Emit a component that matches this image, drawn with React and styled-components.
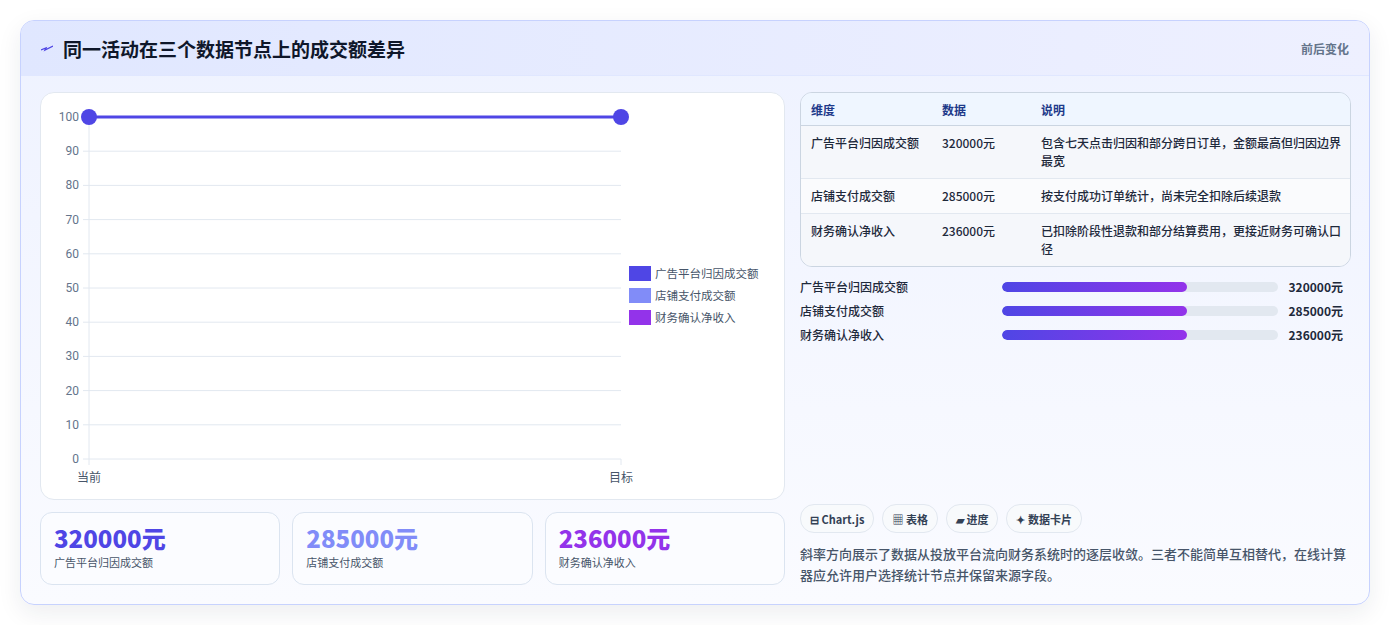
import React from "react";
import styled, { createGlobalStyle } from "styled-components";

const Global = createGlobalStyle`
  body { margin: 0; background: #f3f4f6; font-family: "Noto Sans CJK SC", "Noto Sans", sans-serif; }
`;

const Page = styled.div`
  padding: 20px;
  height: 625px;
  box-sizing: border-box;
  background: #fff;
`;

const Card = styled.div`
  border: 1px solid #c7d2fe;
  border-radius: 14px;
  overflow: hidden;
  background: linear-gradient(180deg, #eef2ff 0%, #fafbff 100%);
  box-shadow: 0 8px 24px rgba(30, 41, 59, 0.08);
  height: 585px;
  box-sizing: border-box;
`;

const Header = styled.div`
  height: 54px;
  display: flex;
  align-items: center;
  justify-content: space-between;
  padding: 0 20px;
  background: linear-gradient(90deg, #e0e7ff, #eef0ff);
  border-bottom: 1px solid #e0e7ff;
`;

const Title = styled.h2`
  margin: 0;
  font-size: 19px;
  font-weight: 700;
  color: #0f172a;
  display: flex;
  align-items: center;
  gap: 10px;
`;

const Tag = styled.span`
  font-size: 12px;
  font-weight: 700;
  color: #64748b;
`;

const Body = styled.div`
  display: grid;
  grid-template-columns: 745px 1fr;
  gap: 15px;
  padding: 16px 18px 18px 19px;
`;

const Col = styled.div`
  display: flex;
  flex-direction: column;
`;

const ChartBox = styled.div`
  background: #fff;
  border: 1px solid #e2e8f0;
  border-radius: 14px;
  height: 408px;
  box-sizing: border-box;
`;

const Stats = styled.div`
  display: grid;
  grid-template-columns: repeat(3, 1fr);
  gap: 12px;
  margin-top: 12px;
`;

const Stat = styled.div`
  border: 1px solid #dbe4f0;
  border-radius: 12px;
  background: #fbfcff;
  padding: 9px 13px 10px;
  height: 73px;
  box-sizing: border-box;
`;

const StatValue = styled.div`
  font-size: 24px;
  font-weight: 800;
  line-height: 32px;
  color: ${(p) => p.$c};
`;

const StatLabel = styled.div`
  font-size: 11px;
  color: #475569;
`;

const Table = styled.table`
  width: 100%;
  border-collapse: separate;
  border-spacing: 0;
  border: 1px solid #cbd5e1;
  border-radius: 12px;
  overflow: hidden;
  font-size: 12px;
  color: #1e293b;
  th {
    text-align: left;
    font-weight: 700;
    color: #1e3a8a;
    background: #eff6ff;
    height: 32px;
    padding: 0 10px;
    border-bottom: 1px solid #cbd5e1;
  }
  td {
    padding: 8px 4px 8px 10px;
    line-height: 18px;
    vertical-align: top;
    font-weight: 500;
    border-bottom: 1px solid #e2e8f0;
  }
  tr:last-child td { border-bottom: none; }
  tbody tr:nth-child(odd) { background: #f5f7fb; }
  tbody tr:nth-child(even) { background: #fafbfd; }
`;

const Bars = styled.div`
  display: flex;
  flex-direction: column;
  gap: 8px;
  margin-top: 11px;
`;

const BarRow = styled.div`
  display: grid;
  grid-template-columns: 202px 276px 1fr;
  align-items: center;
  font-size: 12px;
  height: 16px;
  color: #1e293b;
  font-weight: 500;
`;

const Track = styled.div`
  height: 10px;
  border-radius: 5px;
  background: #e2e8f0;
  overflow: hidden;
`;

const Fill = styled.div`
  height: 100%;
  border-radius: 5px;
  background: linear-gradient(90deg, #4f46e5, #9333ea);
`;

const Value = styled.span`
  text-align: right;
  font-weight: 700;
  padding-right: 8px;
`;

const Spacer = styled.div`
  flex: 1;
`;

const Chips = styled.div`
  display: flex;
  gap: 8px;
`;

const Chip = styled.span`
  font-size: 11px;
  font-weight: 700;
  color: #334155;
  border: 1px solid #e2e8f0;
  background: #f8fafc;
  border-radius: 14px;
  padding: 0 9px;
  height: 27px;
  display: inline-flex;
  align-items: center;
  gap: 3px;
`;

const Note = styled.p`
  margin: 10px 0 0;
  font-size: 13px;
  line-height: 21px;
  color: #475569;
  font-weight: 500;
`;

const rows = [
  ["广告平台归因成交额", "320000元", "包含七天点击归因和部分跨日订单，金额最高但归因边界最宽"],
  ["店铺支付成交额", "285000元", "按支付成功订单统计，尚未完全扣除后续退款"],
  ["财务确认净收入", "236000元", "已扣除阶段性退款和部分结算费用，更接近财务可确认口径"],
];

const Chart = () => {
  const L = 48, R = 580, T = 24, B = 366;
  const ticks = [0, 10, 20, 30, 40, 50, 60, 70, 80, 90, 100];
  const y = (v) => B - ((B - T) * v) / 100;
  const legend = [
    ["广告平台归因成交额", "#4f46e5"],
    ["店铺支付成交额", "#818cf8"],
    ["财务确认净收入", "#9333ea"],
  ];
  return (
    <svg width="743" height="406" fontFamily="Roboto, 'Noto Sans CJK SC', sans-serif">
      {ticks.map((t) => (
        <g key={t}>
          <line x1={L - 6} x2={R} y1={y(t)} y2={y(t)} stroke="#e2e8f0" />
          <text x={L - 10} y={y(t) + 4} textAnchor="end" fontSize="12" fill="#64748b">{t}</text>
        </g>
      ))}
      <line x1={L} x2={L} y1={T} y2={B + 6} stroke="#e2e8f0" />
      <line x1={R} x2={R} y1={B} y2={B + 6} stroke="#e2e8f0" />
      <text x={L} y={389} textAnchor="middle" fontSize="12" fill="#475569">当前</text>
      <text x={R} y={389} textAnchor="middle" fontSize="12" fill="#475569">目标</text>
      <line x1={L} x2={R} y1={T} y2={T} stroke="#4f46e5" strokeWidth="3" />
      <circle cx={L} cy={T} r="8" fill="#4f46e5" />
      <circle cx={R} cy={T} r="8" fill="#4f46e5" />
      {legend.map(([n, c], i) => (
        <g key={n}>
          <rect x={588} y={173 + i * 22} width={22} height={15} fill={c} />
          <text x={614} y={185 + i * 22} fontSize="11.5" fill="#475569">{n}</text>
        </g>
      ))}
    </svg>
  );
};

export default function App() {
  return (
    <>
      <Global />
      <Page>
        <Card>
          <Header>
            <Title>
              <svg width="12" height="8" viewBox="0 0 12 8"><path d="M0 6 L5 4 L4 6 L12 2" stroke="#4f46e5" strokeWidth="1.3" fill="none" /></svg>
              同一活动在三个数据节点上的成交额差异
            </Title>
            <Tag>前后变化</Tag>
          </Header>
          <Body>
            <Col>
              <ChartBox><Chart /></ChartBox>
              <Stats>
                <Stat><StatValue $c="#4f46e5">320000元</StatValue><StatLabel>广告平台归因成交额</StatLabel></Stat>
                <Stat><StatValue $c="#818cf8">285000元</StatValue><StatLabel>店铺支付成交额</StatLabel></Stat>
                <Stat><StatValue $c="#9333ea">236000元</StatValue><StatLabel>财务确认净收入</StatLabel></Stat>
              </Stats>
            </Col>
            <Col>
              <Table>
                <colgroup><col width="131" /><col width="99" /><col /></colgroup>
                <thead><tr><th>维度</th><th>数据</th><th>说明</th></tr></thead>
                <tbody>
                  {rows.map((r) => (
                    <tr key={r[0]}><td>{r[0]}</td><td>{r[1]}</td><td>{r[2]}</td></tr>
                  ))}
                </tbody>
              </Table>
              <Bars>
                {rows.map((r) => (
                  <BarRow key={r[0]}>
                    <span>{r[0]}</span>
                    <Track><Fill style={{ width: "67%" }} /></Track>
                    <Value>{r[1]}</Value>
                  </BarRow>
                ))}
              </Bars>
              <Spacer />
              <Chips>
                <Chip>⊟ Chart.js</Chip>
                <Chip>▦ 表格</Chip>
                <Chip>▰ 进度</Chip>
                <Chip>✦ 数据卡片</Chip>
              </Chips>
              <Note>斜率方向展示了数据从投放平台流向财务系统时的逐层收敛。三者不能简单互相替代，在线计算器应允许用户选择统计节点并保留来源字段。</Note>
            </Col>
          </Body>
        </Card>
      </Page>
    </>
  );
}
